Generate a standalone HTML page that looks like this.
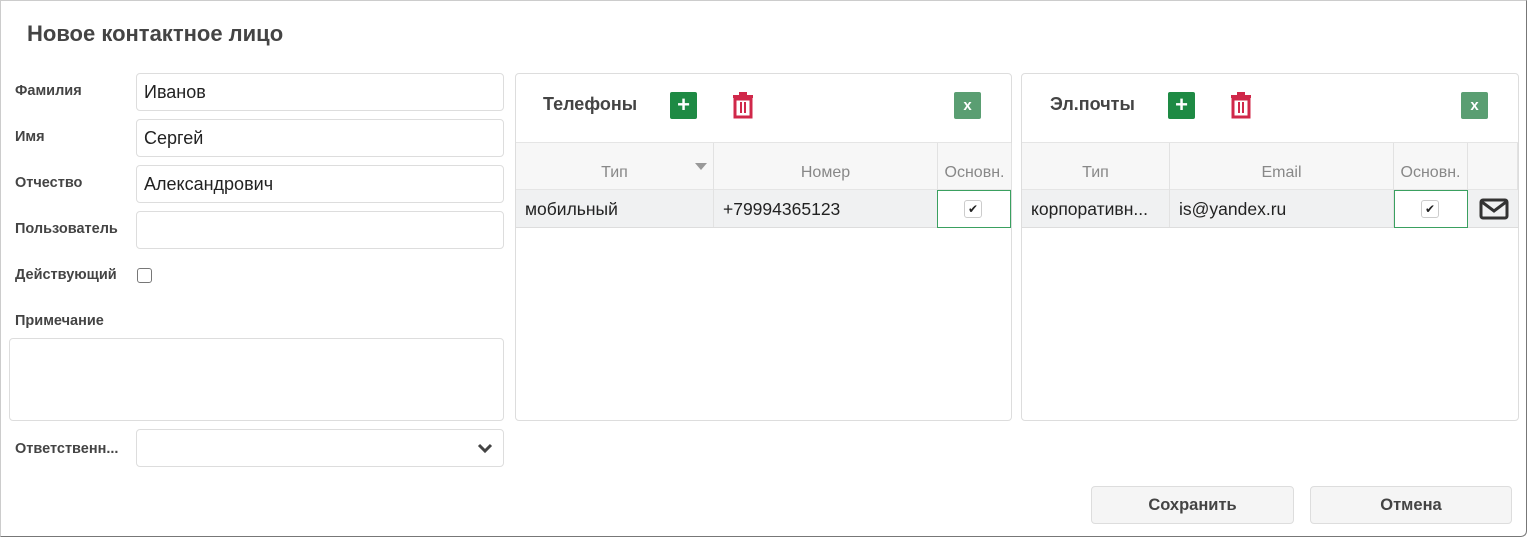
<!DOCTYPE html>
<html><head><meta charset="utf-8"><style>
*{box-sizing:border-box;margin:0;padding:0}
body{width:1528px;height:538px;background:#fff;font-family:"Liberation Sans","DejaVu Sans",sans-serif;color:#333;position:relative;overflow:hidden}
.dlg{position:absolute;left:0;top:0;width:1527px;height:537px;border:1px solid #ccc;border-right:1px solid #777;border-bottom:1px solid #777;border-radius:0 0 6px 0}
.a{position:absolute}
.title{left:27px;top:21px;font-size:22px;font-weight:bold;color:#444}
.lbl{left:15px;font-size:14.5px;font-weight:bold;color:#444}
.inp{left:136px;width:368px;height:38px;border:1px solid #ddd;border-radius:4px;font-size:18px;padding:8px 7px;color:#222}
.panel{border:1px solid #ddd;border-radius:4px;top:73px;height:348px}
.ph{font-size:18px;font-weight:bold;color:#444}
.plus{width:27px;height:27px;background:#1e8a44;border-radius:2px;color:#fff;font-size:22px;line-height:26px;text-align:center;font-weight:bold}
.xl{width:27px;height:27px;background:#5a9e72;border-radius:2px;color:#fff;font-size:15px;line-height:27px;text-align:center;font-weight:bold}
.hdr{top:68px;height:48px;background:#f7f7f7;border-top:1px solid #e5e5e5;border-bottom:1px solid #e5e5e5;left:0;right:0}
.row{top:116px;height:38px;background:#f0f1f2;border-bottom:1px solid #ddd;left:0;right:0}
.th{position:absolute;top:0;height:47px;border-right:1px solid #e2e2e2;font-size:16px;color:#888;text-align:center;padding-top:21px}
.td{position:absolute;top:0;height:37px;border-right:1px solid #e2e2e2;font-size:17.5px;color:#222;padding:9px 9px;white-space:nowrap}
.chkc{position:absolute;top:0;height:38px;border:1px solid #3aa060}
.cb{position:absolute;width:18px;height:18px;border:1px solid #ccc;border-radius:3px;background:#fff;font-size:12px;line-height:16px;text-align:center;color:#222}
.btn{top:486px;height:38px;border:1px solid #ddd;border-radius:4px;background:#f5f5f5;font-size:16.5px;font-weight:bold;color:#444;text-align:center;line-height:36px}
</style></head><body>
<div class="dlg"></div>
<div class="a title">Новое контактное лицо</div>
<div class="a lbl" style="top:83px">Фамилия</div>
<div class="a lbl" style="top:129px">Имя</div>
<div class="a lbl" style="top:175px">Отчество</div>
<div class="a lbl" style="top:221px">Пользователь</div>
<div class="a lbl" style="top:267px">Действующий</div>
<div class="a lbl" style="top:313px">Примечание</div>
<div class="a lbl" style="top:441px">Ответственн...</div>
<div class="a inp" style="top:73px">Иванов</div>
<div class="a inp" style="top:119px">Сергей</div>
<div class="a inp" style="top:165px">Александрович</div>
<div class="a inp" style="top:211px"></div>
<div class="a" style="left:137px;top:268px;width:15px;height:15px;border:1px solid #777;border-radius:3px"></div>
<div class="a" style="left:9px;top:338px;width:495px;height:83px;border:1px solid #ddd;border-radius:4px"></div>
<div class="a inp" style="top:429px"></div>
<svg class="a" style="left:477px;top:442px" width="16" height="12" viewBox="0 0 16 12"><path d="M2 3l6 6 6-6" stroke="#444" stroke-width="3" fill="none"/></svg>

<div class="a panel" style="left:515px;width:497px">
 <div class="a ph" style="left:27px;top:20px">Телефоны</div>
 <div class="a plus" style="left:154px;top:18px">+</div>
 <svg class="a" style="left:216px;top:18px" width="22" height="27" viewBox="0 0 22 27"><rect x="1" y="3" width="20" height="3" fill="#d0284a"/><rect x="7" y="0" width="8" height="3" fill="#d0284a"/><path d="M3 7h16v18H3z" fill="none" stroke="#d0284a" stroke-width="3"/><rect x="8" y="10" width="2" height="11" fill="#d0284a"/><rect x="12" y="10" width="2" height="11" fill="#d0284a"/></svg>
 <div class="a xl" style="left:438px;top:18px">x</div>
 <div class="a hdr">
  <div class="th" style="left:0;width:198px">Тип<span style="position:absolute;right:6px;top:20px;border:6px solid transparent;border-top:7px solid #999"></span></div>
  <div class="th" style="left:198px;width:224px">Номер</div>
  <div class="th" style="left:422px;width:74px">Основн.</div>
 </div>
 <div class="a row">
  <div class="td" style="left:0;width:198px">мобильный</div>
  <div class="td" style="left:198px;width:224px">+79994365123</div>
  <div class="chkc" style="left:421px;width:74px;background:#fff"><div class="cb" style="left:26px;top:9px">✔</div></div>
 </div>
</div>

<div class="a panel" style="left:1021px;width:498px">
 <div class="a ph" style="left:28px;top:20px">Эл.почты</div>
 <div class="a plus" style="left:146px;top:18px">+</div>
 <svg class="a" style="left:208px;top:18px" width="22" height="27" viewBox="0 0 22 27"><rect x="1" y="3" width="20" height="3" fill="#d0284a"/><rect x="7" y="0" width="8" height="3" fill="#d0284a"/><path d="M3 7h16v18H3z" fill="none" stroke="#d0284a" stroke-width="3"/><rect x="8" y="10" width="2" height="11" fill="#d0284a"/><rect x="12" y="10" width="2" height="11" fill="#d0284a"/></svg>
 <div class="a xl" style="left:439px;top:18px">x</div>
 <div class="a hdr">
  <div class="th" style="left:0;width:148px">Тип</div>
  <div class="th" style="left:148px;width:224px">Email</div>
  <div class="th" style="left:372px;width:74px">Основн.</div>
  <div class="th" style="left:446px;width:50px"></div>
 </div>
 <div class="a row">
  <div class="td" style="left:0;width:148px;overflow:hidden">корпоративн...</div>
  <div class="td" style="left:148px;width:224px">is@yandex.ru</div>
  <div class="chkc" style="left:372px;width:74px;background:#fff"><div class="cb" style="left:26px;top:9px">✔</div></div>
  <svg class="a" style="left:457px;top:8px" width="30" height="22" viewBox="0 0 30 22"><rect x="2" y="2" width="26" height="18" fill="none" stroke="#333" stroke-width="3" rx="2"/><path d="M3 4l12 9 12-9" fill="none" stroke="#333" stroke-width="3"/></svg>
 </div>
</div>

<div class="a btn" style="left:1091px;width:203px">Сохранить</div>
<div class="a btn" style="left:1310px;width:202px">Отмена</div>
</body></html>
